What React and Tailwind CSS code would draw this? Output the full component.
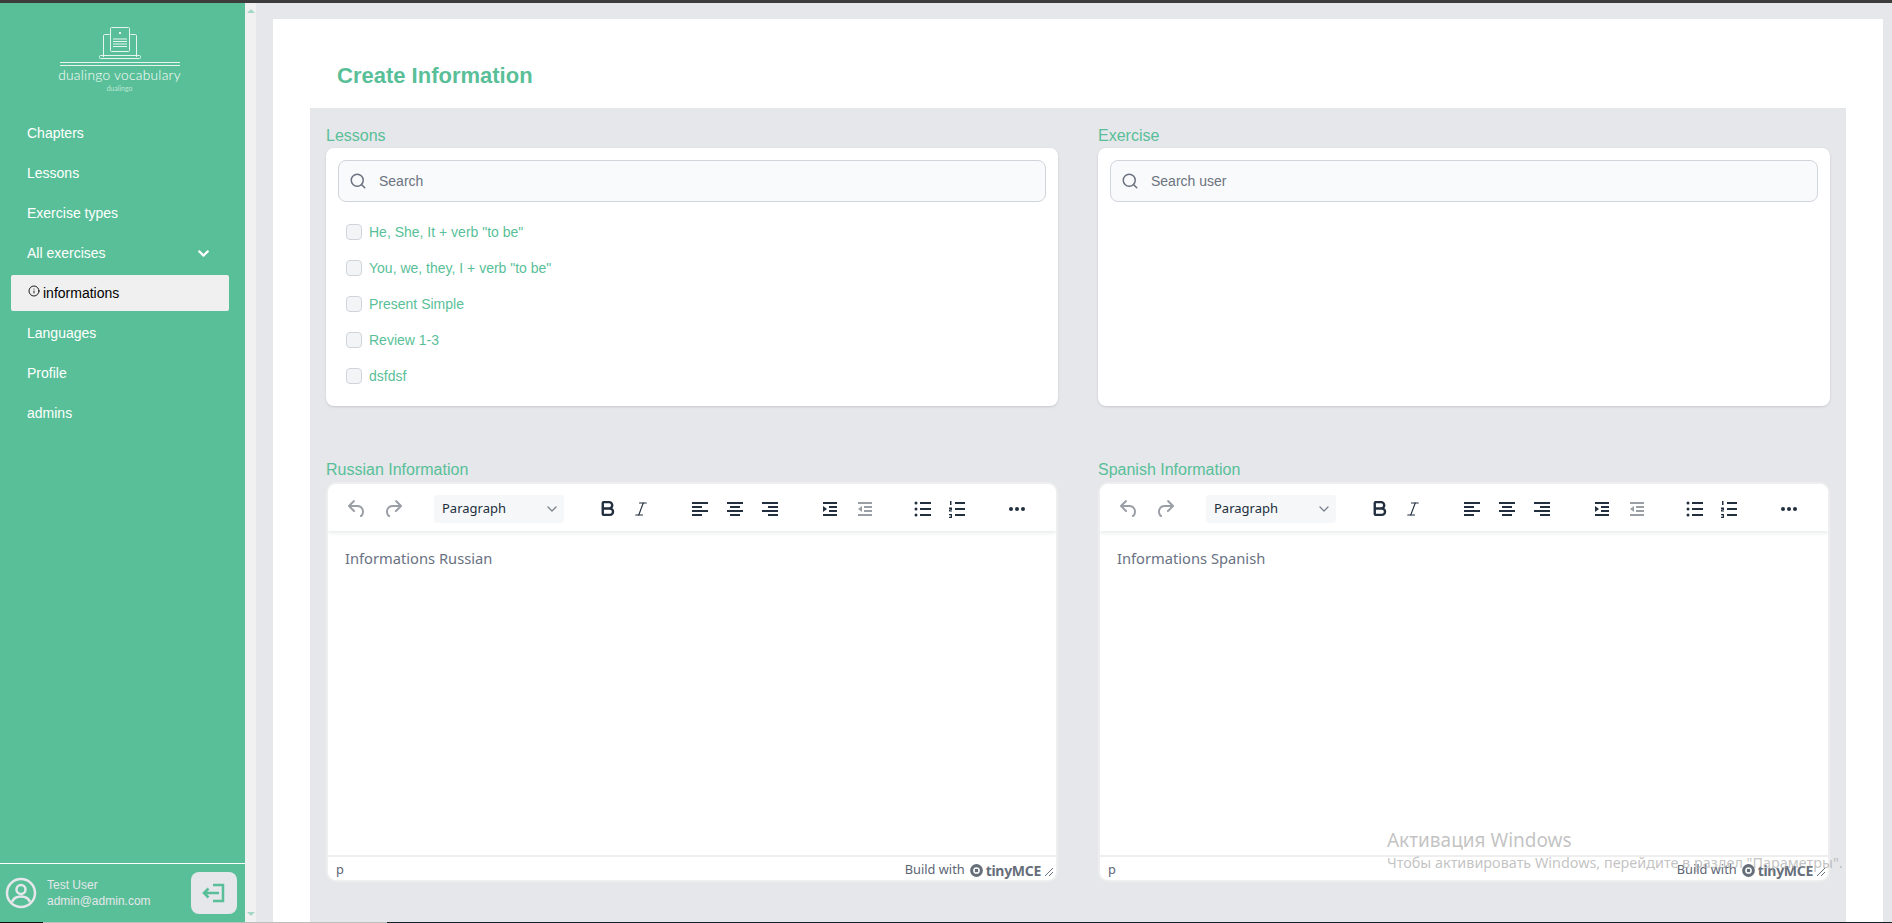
import React from 'react';
import { ChevronDown, Info, Search, Bold, Italic } from 'lucide-react';

const navItems = ['Chapters', 'Lessons', 'Exercise types'];
const navItemsBottom = ['Languages', 'Profile', 'admins'];
const lessons = ['He, She, It + verb "to be"', 'You, we, they, I + verb "to be"', 'Present Simple', 'Review 1-3', 'dsfdsf'];

const Logo = () => (
  <svg width="120" height="40" viewBox="0 0 120 40" fill="none" stroke="#e6f5ef" strokeWidth="1">
    <path d="M43.5 30V8.5q0-1 1-1h5M70.5 7.500h5q1 0 1 1V30" />
    <rect x="50.5" y="0.5" width="19" height="24" rx="1" />
    <path d="M53 12h14M53 14.500h14M53 17h14M53 19.500h14" />
    <rect x="59" y="5" width="2" height="2" fill="#e6f5ef" stroke="none" />
    <rect x="39.500" y="28.500" width="41" height="3" rx="1" />
    <path d="M0 35.500h120M0 38.500h120" />
  </svg>
);

const Line = ({ d }) => <path d={d} stroke="currentColor" strokeWidth="2" fill="none" />;

const AlignIcon = ({ rows }) => (
  <svg width="24" height="24" viewBox="0 0 24 24">
    {rows.map((d, i) => <Line key={i} d={d} />)}
  </svg>
);

const Undo = () => (
  <svg width="24" height="24" viewBox="0 0 24 24" fill="currentColor"><path d="M6.4 8H12c3.7 0 6.2 2 6.8 5.1.6 2.7-.4 5.600-2.300 6.800a1 1 0 0 1-1-1.800c1.100-.6 1.800-2.700 1.400-4.600-.5-2.100-2.100-3.500-4.900-3.500H6.400l3.300 3.300a1 1 0 1 1-1.400 1.400l-5-5a1 1 0 0 1 0-1.400l5-5a1 1 0 0 1 1.400 1.400L6.400 8Z" /></svg>
);

const Redo = () => (
  <svg width="24" height="24" viewBox="0 0 24 24" fill="currentColor"><path d="M17.600 8H12c-3.700 0-6.200 2-6.800 5.100-.6 2.700.4 5.600 2.300 6.800a1 1 0 0 0 1-1.800c-1.100-.6-1.800-2.700-1.400-4.600.5-2.100 2.100-3.500 4.900-3.500h5.600l-3.300 3.300a1 1 0 1 0 1.400 1.400l5-5a1 1 0 0 0 0-1.400l-5-5a1 1 0 0 0-1.400 1.400L17.600 8Z" /></svg>
);

const Editor = ({ text }) => (
  <div className="h-[400px] flex flex-col bg-white border-2 border-[#eeeeee] rounded-[10px] overflow-hidden">
    <div className="h-[47px] shrink-0 flex items-center pl-[17px] pt-[2px] text-[#222f3e] shadow-[0_2px_4px_rgba(34,47,62,0.1)] relative">
      <div className="flex items-center gap-[12px] text-[#9a9fa6] w-[89px]">
        <Undo />
        <Redo />
      </div>
      <div className="w-[130px] h-[28px] bg-[#f6f7f8] rounded-[3px] flex items-center justify-between pl-[8px] pr-[4px] font-['Noto_Sans',sans-serif] text-[13px] text-[#222f3e]">
        Paragraph
        <ChevronDown className="w-[16px] h-[16px] text-[#7b838c]" />
      </div>
      <div className="flex items-center ml-[34px] gap-[11px] w-[70px]">
        <Bold className="w-[19px] h-[19px]" strokeWidth={3} />
        <Italic className="w-[18px] h-[18px] ml-[4px]" strokeWidth={1.5} />
      </div>
      <div className="flex items-center ml-[20px] gap-[11px]">
        <AlignIcon rows={['M4 6h16', 'M4 10h10', 'M4 14h16', 'M4 18h10']} />
        <AlignIcon rows={['M4 6h16', 'M7 10h10', 'M4 14h16', 'M7 18h10']} />
        <AlignIcon rows={['M4 6h16', 'M10 10h10', 'M4 14h16', 'M10 18h10']} />
      </div>
      <div className="flex items-center ml-[36px] gap-[11px]">
        <svg width="24" height="24" viewBox="0 0 24 24"><Line d="M5 6h14M11 10h8M11 14h8M5 18h14" /><path d="M5 9l4 3-4 3z" fill="currentColor" /></svg>
        <svg width="24" height="24" viewBox="0 0 24 24" className="text-[#9a9fa6]"><Line d="M5 6h14M11 10h8M11 14h8M5 18h14" /><path d="M9 9l-4 3 4 3z" fill="currentColor" /></svg>
      </div>
      <div className="flex items-center ml-[34px] gap-[10px]">
        <svg width="24" height="24" viewBox="0 0 24 24"><Line d="M9 6h11M9 12h11M9 18h11" /><circle cx="5" cy="6" r="1.500" fill="currentColor" /><circle cx="5" cy="12" r="1.500" fill="currentColor" /><circle cx="5" cy="18" r="1.500" fill="currentColor" /></svg>
        <svg width="24" height="24" viewBox="0 0 24 24"><Line d="M10 6h10M10 12h10M10 18h10" /><path d="M5 4h1.500v4H5zM4 10.500h3V13H5.500v.5H7v1H4V12.500h1.500V12H4zM4 17h3v4H4v-1h2v-.5H4.500v-1H6V18H4z" fill="currentColor" /></svg>
      </div>
      <div className="flex items-center ml-[36px]">
        <svg width="24" height="24" viewBox="0 0 24 24" fill="currentColor"><circle cx="6" cy="12" r="2" /><circle cx="12" cy="12" r="2" /><circle cx="18" cy="12" r="2" /></svg>
      </div>
    </div>
    <div className="flex-1 pt-[15px] pl-[17px] font-['Noto_Sans',sans-serif] text-[14.700px] leading-[24px] text-[#687282]">{text}</div>
    <div className="h-[25px] shrink-0 border-t-2 border-[#eeeeee] pt-[3px] flex items-center justify-between pl-[8px] pr-[2px] font-['Noto_Sans',sans-serif] text-[12.800px] text-[#5c6573]">
      <span>p</span>
      <div className="flex items-center">
        <span className="mr-[5px]">Build with</span>
        <svg width="13" height="13" viewBox="0 0 12 12" className="mr-[3px]"><circle cx="6" cy="6" r="4.500" fill="none" stroke="#666e7a" strokeWidth="2.800" /><rect x="4.500" y="4.500" width="3" height="3" fill="#666e7a" /></svg>
        <span className="font-bold text-[14px] text-[#666e7a] tracking-[-0.3px]">tinyMCE</span>
        <svg width="10" height="10" viewBox="0 0 10 10" stroke="#666e7a" className="ml-[3px] mt-[3px]"><path d="M1 9l8-8M5 9l4-4" /></svg>
      </div>
    </div>
  </div>
);

const SearchBox = ({ placeholder }) => (
  <div className="h-[42px] flex items-center bg-[#f9fafb] border border-[#d1d5db] rounded-lg pl-[10px] text-[#6b7280] text-[14px]">
    <Search className="w-[18px] h-[18px] text-[#6b7280]" strokeWidth={2} />
    <span className="ml-[12px]">{placeholder}</span>
  </div>
);

const App = () => {
  return (
    <div className="h-screen w-full overflow-hidden flex flex-col bg-[#e5e7eb] font-['Liberation_Sans',Arial,sans-serif]">
      <div className="h-[3px] shrink-0 bg-[#3c3c3c]" />
      <div className="flex-1 min-h-0 flex">
        {/* Sidebar */}
        <aside className="w-[245px] shrink-0 bg-[#59bf98] flex flex-col text-white">
          <div className="pt-[24px] pr-[6px] flex flex-col items-center">
            <Logo />
            <div className="text-[13.700px] leading-[16px] font-['Lato',sans-serif] font-light tracking-[0.3px] text-white">dualingo vocabulary</div>
            <div className="text-[7px] leading-[10px] text-[#bfe6d6] font-['Lato',sans-serif]">dualingo</div>
          </div>
          <nav className="mt-[20px] flex flex-col flex-1 text-[14px]">
            {navItems.map((item) => (
              <div key={item} className="h-[40px] flex items-center pl-[27px]">{item}</div>
            ))}
            <div className="h-[40px] flex items-center justify-between pl-[27px] pr-[33px]">
              All exercises
              <ChevronDown className="w-[17px] h-[17px]" strokeWidth={3} />
            </div>
            <div className="mx-[11px] w-[218px] h-[36px] my-[2px] bg-[#f0f0f0] rounded-[2px] flex items-center pl-[17px] text-black">
              <Info className="w-[12px] h-[12px] -mt-[4px] mr-[3px]" strokeWidth={1.75} />
              informations
            </div>
            {navItemsBottom.map((item) => (
              <div key={item} className="h-[40px] flex items-center pl-[27px]">{item}</div>
            ))}
          </nav>
          <div className="h-[59px] shrink-0 border-t border-white flex items-center pl-[5px]">
            <svg width="32" height="32" viewBox="0 0 32 32" fill="none" stroke="#e5e7eb" strokeWidth="2.500">
              <circle cx="16" cy="16" r="14" />
              <circle cx="16" cy="12.500" r="4.500" />
              <path d="M7 25c1.500-4 4.500-5.500 9-5.500s7.500 1.500 9 5.500" />
            </svg>
            <div className="ml-[10px] text-[12px] leading-[16px] text-[#e5e7eb] flex-1">
              <div>Test User</div>
              <div>admin@admin.com</div>
            </div>
            <div className="w-[46px] h-[42px] mr-[8px] bg-[#e5e7eb] rounded-lg flex items-center justify-center">
              <svg width="24" height="24" viewBox="0 0 24 24" fill="none" stroke="#59bf98" strokeWidth="2.500">
                <path d="M11 4h10v16H11" />
                <path d="M17 12H2M6.500 7.500 2 12l4.500 4.500" />
              </svg>
            </div>
          </div>
        </aside>

        {/* Sidebar scrollbar */}
        <div className="w-[11px] shrink-0 bg-[#f1f1f1] flex flex-col justify-between items-center py-[6px]">
          <div className="w-0 h-0 border-x-[4px] border-x-transparent border-b-[4px] border-b-[#a3d9c4]" />
          <div className="w-0 h-0 border-x-[4px] border-x-transparent border-t-[4px] border-t-[#a3d9c4]" />
        </div>

        {/* Main */}
        <main className="flex-1 min-w-0 pl-[17px] pr-[9px] pt-[16px] overflow-hidden">
          <div className="bg-white pl-[37px] pr-[37px]">
            <h1 className="h-[89px] pl-[27px] pt-[43px] text-[22px] leading-[28px] font-bold text-[#59bf98]">Create Information</h1>
            <div className="bg-[#e5e7eb] px-[16px] pt-[16px] pb-[80px] grid grid-cols-2 gap-x-[40px]">
              <section>
                <div className="text-[16px] leading-[24px] text-[#59bf98]">Lessons</div>
                <div className="h-[258px] bg-white rounded-lg shadow p-[12px]">
                  <SearchBox placeholder="Search" />
                  <ul className="mt-[12px] text-[14px] text-[#59bf98]">
                    {lessons.map((l) => (
                      <li key={l} className="h-[36px] flex items-center pl-[8px]">
                        <span className="w-[16px] h-[16px] rounded-[4px] bg-[#f3f4f6] border border-[#d1d5db]" />
                        <span className="ml-[7px]">{l}</span>
                      </li>
                    ))}
                  </ul>
                </div>
              </section>
              <section>
                <div className="text-[16px] leading-[24px] text-[#59bf98]">Exercise</div>
                <div className="h-[258px] bg-white rounded-lg shadow p-[12px]">
                  <SearchBox placeholder="Search user" />
                </div>
              </section>
              <section className="mt-[52px]">
                <div className="text-[16px] leading-[24px] text-[#59bf98]">Russian Information</div>
                <Editor text="Informations Russian" />
              </section>
              <section className="mt-[52px]">
                <div className="text-[16px] leading-[24px] text-[#59bf98]">Spanish Information</div>
                <Editor text="Informations Spanish" />
              </section>
            </div>
          </div>
        </main>
      </div>
      {/* Taskbar edge */}
      <div className="h-[1px] shrink-0 flex">
        <div className="w-[43px] bg-[#111111]" />
        <div className="w-[344px] bg-[#bdbdbd]" />
        <div className="flex-1 bg-[#16202a]" />
      </div>

      {/* Windows activation watermark */}
      <div className="absolute left-[1387px] top-[828px] font-['Noto_Sans',sans-serif] text-[#a9a9a9]/70 pointer-events-none">
        <div className="text-[19px] leading-[24px]">Активация Windows</div>
        <div className="text-[14.400px] leading-[20px] mt-[1px]">Чтобы активировать Windows, перейдите в раздел "Параметры".</div>
      </div>
    </div>
  );
};

export default App;
